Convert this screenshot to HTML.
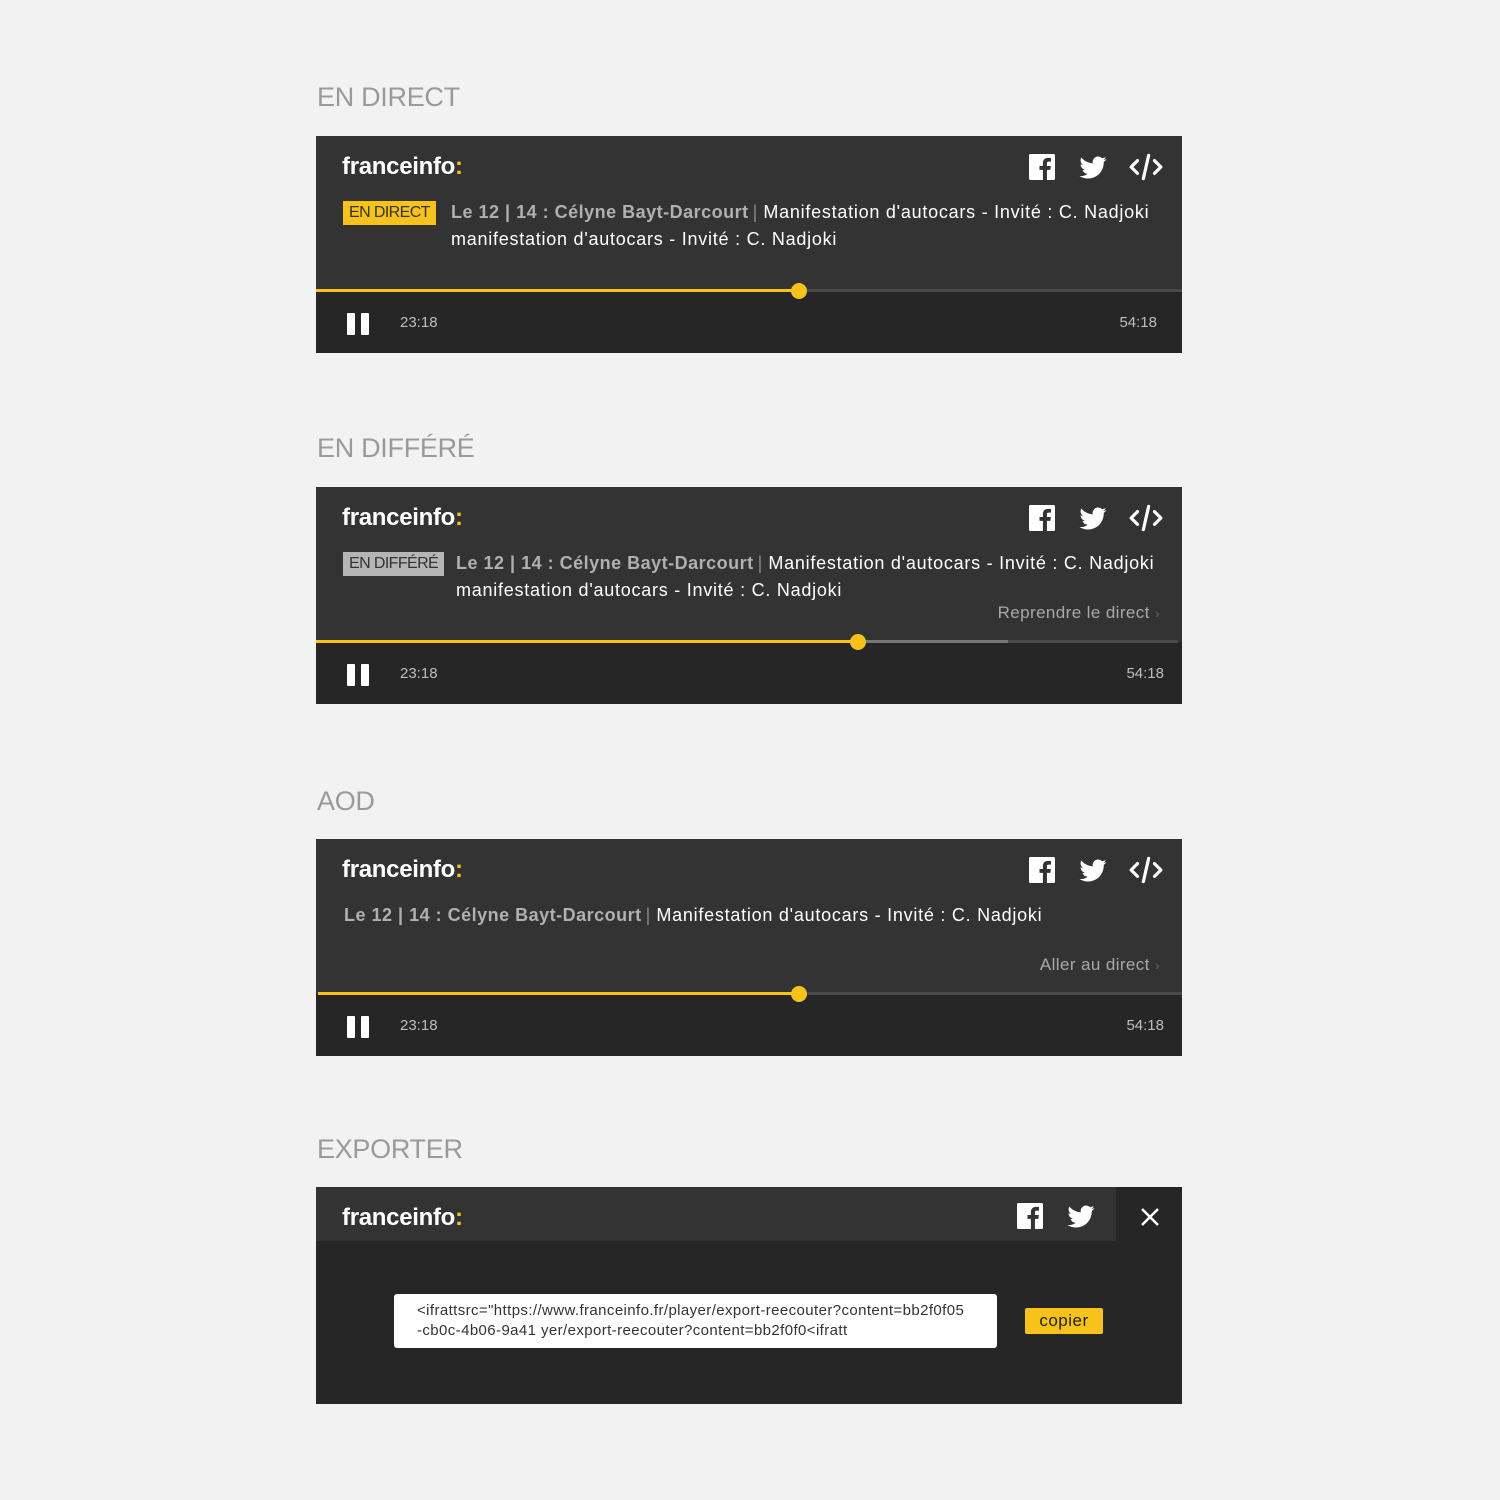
<!DOCTYPE html>
<html><head><meta charset="utf-8"><style>
*{margin:0;padding:0;box-sizing:border-box}
body{width:1500px;height:1500px;background:#f2f2f2;position:relative;font-family:"Liberation Sans",sans-serif;overflow:hidden}
.h{position:absolute;left:317px;font-size:27px;color:#9a9a9a;letter-spacing:-0.3px}
.p{position:absolute;left:316px;width:866px;height:217px;background:#333}
.bot{position:absolute;left:0;right:0;bottom:0;height:62px;background:#262626}
.logo{position:absolute;left:26px;top:17px;font-size:24px;font-weight:bold;color:#fff;letter-spacing:-0.3px}
.logo b{color:#f7c21a}
.t{position:absolute;font-size:18px;color:#fff;white-space:nowrap;line-height:27px;letter-spacing:0.75px}
.t .g{color:#b0b0b0;font-weight:bold;letter-spacing:0.5px}
.t .s{color:#888;margin:0 6px 0 4px;letter-spacing:0}
.badge{position:absolute;left:27px;top:65px;height:24px;padding:0 6px;font-size:16px;line-height:24px;color:#333;letter-spacing:-0.6px}
.track{position:absolute;left:0;right:0;height:3px;background:#4a4a4a}
.fill{position:absolute;left:0;top:0;height:3px;background:#f7c21a}
.dot{position:absolute;width:16px;height:16px;border-radius:50%;background:#f7c21a;top:-6.5px}
.pause{position:absolute;left:31px;bottom:18px;width:22px;height:22px}
.pause:before,.pause:after{content:"";position:absolute;top:0;width:8px;height:22px;background:#fff;border-radius:1px}
.pause:before{left:0}.pause:after{right:0}
.tm{position:absolute;bottom:22px;font-size:15px;color:#bdbdbd}
.link{position:absolute;font-size:17px;color:#a8a8a8;letter-spacing:0.4px}
</style></head><body>
<svg width="0" height="0" style="position:absolute">
<defs>
<symbol id="fb" viewBox="0 0 24 24"><path fill="#fff" d="M22.675 0H1.325C.593 0 0 .593 0 1.325v21.351C0 23.407.593 24 1.325 24H12.820v-9.294H9.692v-3.622h3.128V8.413c0-3.1 1.894-4.788 4.659-4.788 1.325 0 2.463.099 2.795.143v3.240l-1.918.001c-1.504 0-1.795.715-1.795 1.763v2.313h3.587l-.467 3.622h-3.120V24h6.116c.73 0 1.323-.593 1.323-1.325V1.325C24 .593 23.407 0 22.675 0z"/></symbol>
<symbol id="tw" viewBox="0 0 24 24"><path fill="#fff" d="M23.953 4.57a10 10 0 01-2.825.775 4.958 4.958 0 002.163-2.723c-.951.555-2.005.959-3.127 1.184a4.92 4.92 0 00-8.384 4.482C7.69 8.095 4.067 6.13 1.64 3.162a4.822 4.822 0 00-.666 2.475c0 1.71.87 3.213 2.188 4.096a4.904 4.904 0 01-2.228-.616v.06a4.923 4.923 0 003.946 4.827 4.996 4.996 0 01-2.212.085 4.936 4.936 0 004.604 3.417 9.867 9.867 0 01-6.102 2.105c-.39 0-.779-.023-1.170-.067a13.995 13.995 0 007.557 2.209c9.053 0 13.998-7.496 13.998-13.985 0-.21 0-.42-.015-.63A9.935 9.935 0 0024 4.59z"/></symbol>
<symbol id="cd" viewBox="0 0 32 28"><path fill="none" stroke="#fff" stroke-width="3" stroke-linecap="round" stroke-linejoin="round" d="M8 8L2 14l6 6M24 8l6 6-6 6M18.5 3l-5 22"/></symbol>
</defs></svg>

<div class="h" style="top:82px">EN DIRECT</div>
<div class="p" style="top:136px">
 <div class="logo">franceinfo<b>:</b></div>
 <svg style="position:absolute;left:713px;top:18px" width="26" height="26"><use href="#fb"/></svg>
 <svg style="position:absolute;left:762px;top:18px" width="30" height="27"><use href="#tw"/></svg>
 <svg style="position:absolute;left:813px;top:16px" width="34" height="30"><use href="#cd"/></svg>
 <div class="badge" style="background:#f7c21a">EN DIRECT</div>
 <div class="t" style="left:135px;top:63px"><span class="g">Le 12 | 14 : Célyne Bayt-Darcourt</span><span class="s">|</span>Manifestation d'autocars - Invité : C. Nadjoki<br>manifestation d'autocars - Invité : C. Nadjoki</div>
 <div class="bot"></div>
 <div class="track" style="top:153px"><div class="fill" style="width:483px"></div><div class="dot" style="left:475px"></div></div>
 <div class="pause"></div><div class="tm" style="left:84px">23:18</div><div class="tm" style="right:25px">54:18</div>
</div>

<div class="h" style="top:433px">EN DIFFÉRÉ</div>
<div class="p" style="top:487px">
 <div class="logo">franceinfo<b>:</b></div>
 <svg style="position:absolute;left:713px;top:18px" width="26" height="26"><use href="#fb"/></svg>
 <svg style="position:absolute;left:762px;top:18px" width="30" height="27"><use href="#tw"/></svg>
 <svg style="position:absolute;left:813px;top:16px" width="34" height="30"><use href="#cd"/></svg>
 <div class="badge" style="background:#b5b5b5;top:65px">EN DIFFÉRÉ</div>
 <div class="t" style="left:140px;top:63px"><span class="g">Le 12 | 14 : Célyne Bayt-Darcourt</span><span class="s">|</span>Manifestation d'autocars - Invité : C. Nadjoki<br>manifestation d'autocars - Invité : C. Nadjoki</div>
 <div class="link" style="right:22px;top:116px">Reprendre le direct <span style="color:#666;font-size:14px">&#8250;</span></div>
 <div class="bot"></div>
 <div class="track" style="top:153px;right:4px"><div class="fill" style="width:542px"></div><div style="position:absolute;left:542px;width:150px;height:3px;background:#777"></div><div class="dot" style="left:534px"></div></div>
 <div class="pause"></div><div class="tm" style="left:84px">23:18</div><div class="tm" style="right:18px">54:18</div>
</div>

<div class="h" style="top:786px">AOD</div>
<div class="p" style="top:839px">
 <div class="logo">franceinfo<b>:</b></div>
 <svg style="position:absolute;left:713px;top:18px" width="26" height="26"><use href="#fb"/></svg>
 <svg style="position:absolute;left:762px;top:18px" width="30" height="27"><use href="#tw"/></svg>
 <svg style="position:absolute;left:813px;top:16px" width="34" height="30"><use href="#cd"/></svg>
 <div class="t" style="left:28px;top:63px"><span class="g">Le 12 | 14 : Célyne Bayt-Darcourt</span><span class="s">|</span>Manifestation d'autocars - Invité : C. Nadjoki</div>
 <div class="link" style="right:22px;top:116px">Aller au direct <span style="color:#666;font-size:14px">&#8250;</span></div>
 <div class="bot"></div>
 <div class="track" style="top:153px;left:2px"><div class="fill" style="width:481px"></div><div class="dot" style="left:473px"></div></div>
 <div class="pause"></div><div class="tm" style="left:84px">23:18</div><div class="tm" style="right:18px">54:18</div>
</div>

<div class="h" style="top:1134px">EXPORTER</div>
<div class="p" style="top:1187px;background:#262626">
 <div style="position:absolute;left:0;top:0;width:800px;height:54px;background:#333"></div>
 <div class="logo">franceinfo<b>:</b></div>
 <svg style="position:absolute;left:701px;top:16px" width="26" height="26"><use href="#fb"/></svg>
 <svg style="position:absolute;left:750px;top:16px" width="30" height="27"><use href="#tw"/></svg>
 <svg style="position:absolute;left:824px;top:20px" width="20" height="20"><path d="M2 2L18 18M18 2L2 18" stroke="#fff" stroke-width="2.5"/></svg>
 <div style="position:absolute;left:78px;top:107px;width:603px;height:54px;background:#fff;border-radius:3px;padding:7px 0 0 23px;font-size:15px;line-height:20px;color:#333;letter-spacing:0.4px;white-space:nowrap;overflow:hidden">&lt;ifrattsrc="https://www.franceinfo.fr/player/export-reecouter?content=bb2f0f05<br>-cb0c-4b06-9a41 yer/export-reecouter?content=bb2f0f0&lt;ifratt</div>
 <div style="position:absolute;left:709px;top:121px;width:78px;height:26px;background:#f7c21a;border-radius:2px;font-size:17px;line-height:26px;text-align:center;color:#222;letter-spacing:0.5px">copier</div>
</div>
</body></html>
